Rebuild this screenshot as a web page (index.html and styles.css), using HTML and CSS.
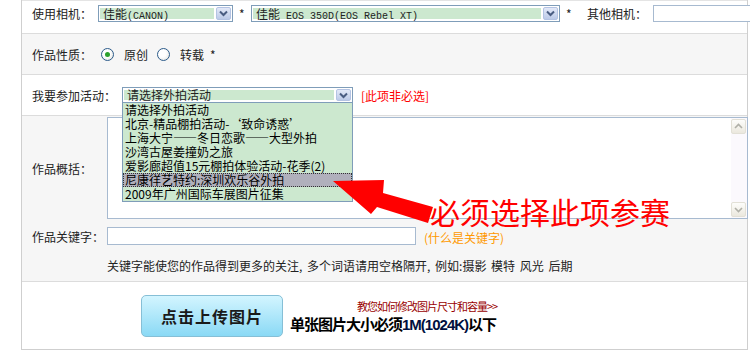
FILE: index.html
```html
<!DOCTYPE html>
<html lang="zh-CN">
<head>
    <meta charset="UTF-8">
    <title>上传作品</title>
    <link rel="stylesheet" href="styles.css">
</head>
<body>
    <div class="page">
        <div class="form">
            <!-- 相机 -->
            <div class="row row-camera">
                <span class="label">使用相机：</span>
                <div class="select select-brand">
                    <div class="val">佳能<span class="mono">(CANON)</span></div>
                    <div class="btn"><svg width="13" height="11" viewBox="0 0 13 11"><polyline points="3,3.5 6.5,7 10,3.5" /></svg></div>
                </div>
                <span class="req">*</span>
                <div class="select select-model">
                    <div class="val">佳能<span class="mono"> EOS 350D(EOS Rebel XT)</span></div>
                    <div class="btn"><svg width="13" height="11" viewBox="0 0 13 11"><polyline points="3,3.5 6.5,7 10,3.5" /></svg></div>
                </div>
                <span class="req req-last">*</span>
                <span class="label">其他相机：</span>
                <div class="input input-other"></div>
            </div>

            <!-- 作品性质 -->
            <div class="row row-alt row-type">
                <span class="label">作品性质：</span>
                <span class="radio checked"></span>
                <span class="radio-text">原创</span>
                <span class="radio"></span>
                <span class="radio-text">转载</span>
                <span class="req">*</span>
            </div>

            <!-- 活动 -->
            <div class="row row-event">
                <span class="label">我要参加活动：</span>
                <div class="select select-event">
                    <div class="val">请选择外拍活动</div>
                    <div class="btn"><svg width="13" height="11" viewBox="0 0 13 11"><polyline points="3,3.5 6.5,7 10,3.5" /></svg></div>
                    <ul class="options">
                        <li>请选择外拍活动</li>
                        <li>北京-精品棚拍活动-‘致命诱惑’</li>
                        <li>上海大宁——冬日恋歌——大型外拍</li>
                        <li>沙湾古屋姜撞奶之旅</li>
                        <li>爱影廊超值15元棚拍体验活动-花季(2)</li>
                        <li class="active">尼康徉艺特约:深圳欢乐谷外拍</li>
                        <li>2009年广州国际车展图片征集</li>
                    </ul>
                </div>
                <span class="note">[此项非必选]</span>
            </div>

            <!-- 概括 + 关键字 -->
            <div class="block row-alt">
                <div class="field field-desc">
                    <span class="label label-col">作品概括：</span>
                    <div class="textarea">
                        <div class="scrollbar">
                            <div class="sb-btn"><svg width="13" height="13" viewBox="0 0 13 13"><polyline points="3,8 6.5,4.5 10,8" /></svg></div>
                            <div class="sb-btn"><svg width="13" height="13" viewBox="0 0 13 13"><polyline points="3,5 6.5,8.5 10,5" /></svg></div>
                        </div>
                    </div>
                </div>
                <div class="field field-key">
                    <span class="label label-col">作品关键字：</span>
                    <div class="input input-key"></div>
                    <span class="what">(什么是关键字)</span>
                </div>
                <div class="hint">关键字能使您的作品得到更多的关注, 多个词语请用空格隔开, 例如:摄影 模特 风光 后期</div>
            </div>

            <!-- 上传 -->
            <div class="row row-upload">
                <div class="upload-btn">点击上传图片</div>
                <div class="upload-info">
                    <span class="howto">教您如何修改图片尺寸和容量&gt;&gt;</span>
                    <span class="limit">单张图片大小必须<span class="size">1M(1024K)</span>以下</span>
                </div>
            </div>
        </div>

        <!-- 标注 -->
        <svg class="arrow" width="750" height="351" viewBox="0 0 750 351">
            <polygon points="333,181 384,180 383,193 433,207 428,223 377,207 371,214" />
        </svg>
        <div class="callout">必须选择此项参赛</div>
    </div>
</body>
</html>
```

FILE: styles.css
```css
* {
    margin: 0;
    padding: 0;
    box-sizing: border-box;
}

body {
    background-color: #fff;
    font-family: "Noto Sans CJK SC", sans-serif;
    font-size: 12px;
    color: #222;
}

.page {
    position: relative;
    width: 750px;
    height: 351px;
    padding-left: 21px;
    overflow: hidden;
}

.form {
    width: 727px;
    height: 350px;
    border-left: 1px solid #cfcfcf;
    border-right: 1px solid #cfcfcf;
    border-bottom: 1px solid #cfcfcf;
}

.row {
    display: flex;
    align-items: center;
    gap: 6px;
    padding-left: 10px;
    border-bottom: 1px solid #dcdcdc;
}

.row > * {
    flex-shrink: 0;
}

.row-alt {
    background-color: #f6f6f6;
}

.label {
    line-height: 17px;
    white-space: nowrap;
}

.req {
    width: 6px;
    line-height: 17px;
}

.req-last {
    margin-right: 9px;
}

.mono {
    font-family: "Liberation Mono", monospace;
    font-size: 10px;
}

/* 相机 */
.row-camera {
    height: 34px;
    align-items: flex-start;
    padding-top: 4px;
    border-top: 1px solid #e4e4e4;
}

/* 仿下拉框 */
.select {
    position: relative;
    display: flex;
    height: 17px;
    padding: 1px;
    border: 1px solid #7f9db9;
    background-color: #fff;
}

.select .val {
    flex: 1;
    margin: 1px 2px 1px 0;
    padding-left: 3px;
    background-color: #cce8cf;
    line-height: 11px;
    white-space: nowrap;
}

.select .btn {
    width: 15px;
    border: 1px solid #b4c3e3;
    border-radius: 2px;
    background: linear-gradient(#e3e9f8, #bccae8);
}

.select .btn svg {
    display: block;
}

.select .btn polyline {
    fill: none;
    stroke: #4a5d82;
    stroke-width: 2;
}

.select-brand {
    width: 135px;
}

.select-model {
    width: 309px;
}

.input {
    height: 17px;
    border: 1px solid #a7bad0;
    background-color: #fff;
}

.input-other {
    width: 110px;
}

/* 作品性质 */
.row-type {
    height: 41px;
}

.radio {
    width: 13px;
    height: 13px;
    margin-left: 3px;
    border: 1px solid #2c5b8a;
    border-radius: 50%;
    background: radial-gradient(circle at 40% 40%, #fff 40%, #dcdcd6);
    display: flex;
    align-items: center;
    justify-content: center;
}

.radio.checked::after {
    content: "";
    width: 5px;
    height: 5px;
    border-radius: 50%;
    background-color: #2ca12c;
}

.radio-text {
    margin-left: 4px;
    line-height: 17px;
}

/* 活动 */
.row-event {
    height: 41px;
}

.select-event {
    width: 231px;
    height: 16px;
}

.select-event .val {
    line-height: 10px;
}

.options {
    position: absolute;
    top: 14px;
    left: -1px;
    width: 231px;
    list-style: none;
    border: 1px solid #7f9db9;
    background-color: #cce8cf;
    z-index: 2;
}

.options li {
    height: 14px;
    padding-left: 2px;
    line-height: 14px;
    font-size: 12px;
    color: #000;
    white-space: nowrap;
}

.options li.active {
    background-color: #b0b0bc;
    outline: 1px dotted #333;
    outline-offset: -1px;
}

.note {
    margin-left: 2px;
    color: #f00;
    line-height: 17px;
}

/* 概括 + 关键字 */
.block {
    display: flex;
    flex-direction: column;
    height: 166px;
    padding: 1px 0 9px 10px;
    border-bottom: 1px solid #dcdcdc;
}

.field {
    display: flex;
    align-items: center;
}

.field > * {
    flex-shrink: 0;
}

.label-col {
    width: 75px;
}

.textarea {
    display: flex;
    justify-content: flex-end;
    width: 641px;
    height: 102px;
    border: 1px solid #a7bad0;
    background-color: #fff;
}

.scrollbar {
    display: flex;
    flex-direction: column;
    justify-content: space-between;
    width: 16px;
    padding: 1px 1px 1px 0;
    background-color: #fbf9fd;
}

.sb-btn {
    width: 15px;
    height: 15px;
    border: 1px solid #e2e0d6;
    border-radius: 2px;
    background: linear-gradient(#fdfdfb, #ebe8de);
}

.sb-btn svg {
    display: block;
}

.sb-btn polyline {
    fill: none;
    stroke: #b0b0a8;
    stroke-width: 1.6;
}

.field-key {
    margin-top: 7px;
}

.input-key {
    width: 309px;
    height: 18px;
}

.what {
    margin-left: 8px;
    color: #f90;
    line-height: 17px;
    padding-top: 3px;
}

.hint {
    margin-top: 12px;
    padding-left: 75px;
    line-height: 16px;
    word-spacing: 2px;
}

/* 上传 */
.row-upload {
    height: 67px;
    gap: 7px;
    padding-left: 119px;
    border-bottom: none;
}

.upload-btn {
    width: 142px;
    height: 42px;
    border: 1px solid #86bfd6;
    border-radius: 5px;
    background: linear-gradient(#d3f5ff, #8ad9f5);
    color: #1a1a1a;
    font-size: 16px;
    font-weight: bold;
    letter-spacing: 1px;
    line-height: 40px;
    text-align: center;
}

.upload-info {
    display: flex;
    flex-direction: column;
}

.howto {
    margin-left: 67px;
    color: #990000;
    font-size: 11px;
    letter-spacing: -1px;
    line-height: 16px;
}

.limit {
    color: #000;
    font-size: 15px;
    font-weight: bold;
    letter-spacing: -1px;
    line-height: 19px;
}

.limit .size {
    font-family: "Liberation Sans", sans-serif;
    color: #001040;
}

/* 红色标注 */
.arrow {
    position: absolute;
    top: 0;
    left: 0;
    pointer-events: none;
    z-index: 3;
}

.arrow polygon {
    fill: #f00;
}

.callout {
    position: absolute;
    top: 196px;
    left: 430px;
    color: #f00;
    font-size: 30px;
    line-height: 30px;
    z-index: 3;
    white-space: nowrap;
}
```
